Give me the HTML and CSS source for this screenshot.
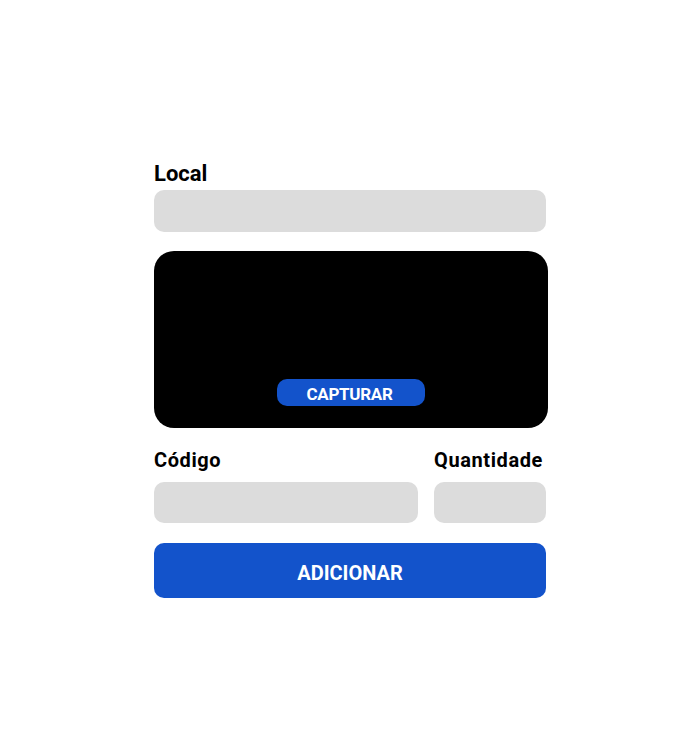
FILE: index.html
```html
<!DOCTYPE html>
<html lang="pt-BR">
<head>
    <meta charset="UTF-8">
    <meta name="viewport" content="width=device-width, initial-scale=1.0">
    <title>Inventário</title>
    <link rel="stylesheet" href="styles.css">
</head>
<body>
    <form class="form">
        <!-- Local -->
        <label class="label label-big" for="local">Local</label>
        <input type="text" id="local" class="field">

        <!-- Câmera -->
        <div class="camera">
            <button type="button" class="btn-capture">CAPTURAR</button>
        </div>

        <!-- Código e quantidade -->
        <div class="row">
            <div class="col col-code">
                <label class="label" for="codigo">Código</label>
                <input type="text" id="codigo" class="field field-sm">
            </div>
            <div class="col col-qty">
                <label class="label" for="quantidade">Quantidade</label>
                <input type="text" id="quantidade" class="field field-sm">
            </div>
        </div>

        <button type="button" class="btn-add">ADICIONAR</button>
    </form>
</body>
</html>
```

FILE: styles.css
```css
body {
    font-family: Roboto, "Liberation Sans", sans-serif;
    background-color: #fff;
    color: #000;
    margin: 0;
    padding: 0;
}
.form {
    width: 392px;
    margin: 0 auto;
    padding-top: 161px;
    display: flex;
    flex-direction: column;
}
.label {
    display: block;
    font-weight: 700;
    font-size: 20px;
    line-height: 24px;
    letter-spacing: 0.6px;
    margin-bottom: 10px;
    white-space: nowrap;
}
.label-big {
    font-size: 22px;
    line-height: 26px;
    letter-spacing: 0;
    margin-bottom: 3px;
}
.field {
    box-sizing: border-box;
    width: 100%;
    height: 42px;
    border: none;
    border-radius: 10px;
    background-color: #dcdcdc;
    margin: 0 0 19px;
    padding: 0 12px;
    font-size: 16px;
}
.field-sm {
    height: 41px;
    margin: 0;
}
.camera {
    box-sizing: border-box;
    width: 394px;
    height: 177px;
    background-color: #000;
    border-radius: 20px;
    display: flex;
    justify-content: center;
    align-items: flex-end;
    padding-bottom: 22px;
    margin-bottom: 20px;
}
.btn-capture {
    box-sizing: border-box;
    width: 148px;
    height: 27px;
    border: none;
    border-radius: 10px;
    background-color: #1353cb;
    color: #fff;
    font-family: Roboto, sans-serif;
    font-weight: 700;
    font-size: 17px;
    letter-spacing: -0.3px;
    padding: 3px 3px 0 0;
}
.row {
    display: flex;
    gap: 16px;
    margin-bottom: 20px;
}
.col {
    display: flex;
    flex-direction: column;
}
.col-code {
    flex: 1;
}
.col-qty {
    width: 112px;
    align-items: flex-end;
}
.col-qty .label {
    margin-right: 3px;
}
.btn-add {
    box-sizing: border-box;
    height: 55px;
    border: none;
    border-radius: 10px;
    background-color: #1353cb;
    color: #fff;
    font-family: Roboto, sans-serif;
    font-weight: 700;
    font-size: 20px;
    padding: 4px 0 0;
}
```
